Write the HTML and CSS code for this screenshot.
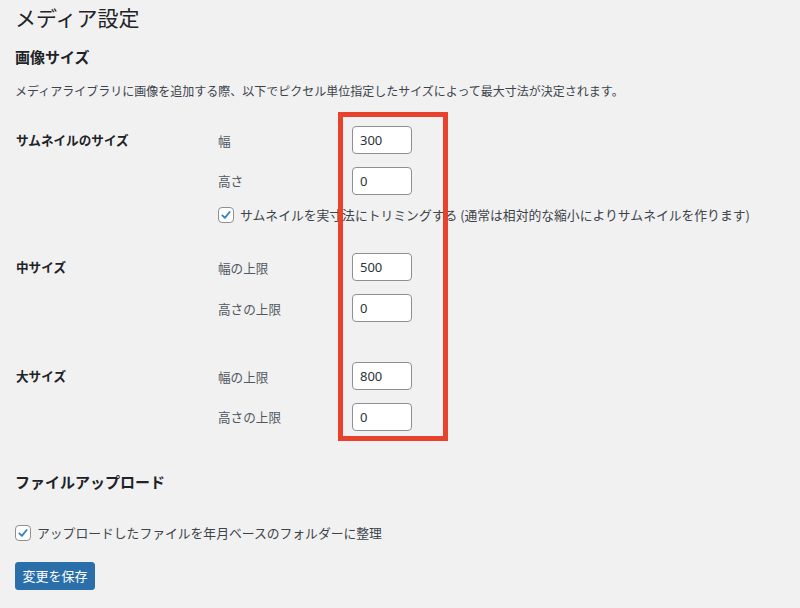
FILE: index.html
```html
<!DOCTYPE html>
<html lang="ja">
<head>
<meta charset="utf-8">
<title>メディア設定</title>
<link rel="stylesheet" href="styles.css">
</head>
<body>
<div class="wrap">
  <h1 class="title">メディア設定</h1>
  <h2 class="heading">画像サイズ</h2>
  <p class="desc">メディアライブラリに画像を追加する際、以下でピクセル単位指定したサイズによって最大寸法が決定されます。</p>

  <div class="group group-first">
    <div class="th">サムネイルのサイズ</div>
    <div class="fields">
      <div class="field"><span class="flabel">幅</span><span class="input">300</span></div>
      <div class="field"><span class="flabel">高さ</span><span class="input">0</span></div>
      <div class="check-row">
        <span class="checkbox"><svg viewBox="0 0 16 16" width="16" height="16"><path d="M3.8 8.4 L6.7 11.3 L12.2 4.6" fill="none" stroke="#3582c4" stroke-width="2.1" stroke-linecap="round" stroke-linejoin="round"/></svg></span>
        <span class="check-text">サムネイルを実寸法にトリミングする (通常は相対的な縮小によりサムネイルを作ります)</span>
      </div>
    </div>
  </div>

  <div class="group group-mid">
    <div class="th">中サイズ</div>
    <div class="fields">
      <div class="field"><span class="flabel">幅の上限</span><span class="input">500</span></div>
      <div class="field"><span class="flabel">高さの上限</span><span class="input">0</span></div>
    </div>
  </div>

  <div class="group group-large">
    <div class="th">大サイズ</div>
    <div class="fields">
      <div class="field"><span class="flabel">幅の上限</span><span class="input">800</span></div>
      <div class="field"><span class="flabel">高さの上限</span><span class="input">0</span></div>
    </div>
  </div>

  <h2 class="heading heading-upload">ファイルアップロード</h2>
  <div class="check-row upload-row">
    <span class="checkbox"><svg viewBox="0 0 16 16" width="16" height="16"><path d="M3.8 8.4 L6.7 11.3 L12.2 4.6" fill="none" stroke="#3582c4" stroke-width="2.1" stroke-linecap="round" stroke-linejoin="round"/></svg></span>
    <span class="check-text">アップロードしたファイルを年月ベースのフォルダーに整理</span>
  </div>
  <button class="save" type="button">変更を保存</button>
</div>
<div class="highlight"></div>
</body>
</html>
```

FILE: styles.css
```css
html, body {
  margin: 0;
  padding: 0;
}
body {
  background: #f1f1f1;
  font-family: "Noto Sans CJK JP", "Noto Sans", sans-serif;
  font-size: 12.4px;
  color: #3c434a;
  width: 800px;
  height: 608px;
  overflow: hidden;
  position: relative;
}
.wrap {
  padding-left: 15px;
  display: flex;
  flex-direction: column;
  align-items: flex-start;
}
.title {
  margin: 0;
  font-size: 21px;
  font-weight: 400;
  line-height: 34px;
  color: #1d2327;
}
.heading {
  margin: 12px 0 0;
  font-size: 15px;
  font-weight: 700;
  line-height: 22px;
  color: #1d2327;
}
.desc {
  margin: 13px 0 0;
  line-height: 20px;
  font-size: 12px;
}
.group {
  display: grid;
  grid-template-columns: 203px auto;
}
.group-first { margin-top: 25px; }
.group-mid { margin-top: 30px; }
.group-large { margin-top: 40px; }
.th {
  font-weight: 700;
  color: #1d2327;
  line-height: 28px;
  padding-left: 1px;
  font-size: 12.6px;
}
.fields {
  display: flex;
  flex-direction: column;
  gap: 12.7px;
}
.field {
  display: flex;
  align-items: center;
  height: 28px;
}
.flabel {
  width: 134px;
  color: #50575e;
  font-size: 12.6px;
}
.input {
  box-sizing: border-box;
  width: 60px;
  height: 28px;
  border: 1px solid #8c8f94;
  border-radius: 4px;
  background: #fff;
  padding: 0 7px;
  font-family: "Noto Sans", "Liberation Sans", sans-serif;
  font-size: 13px;
  line-height: 26px;
  color: #2c3338;
}
.check-row {
  display: flex;
  align-items: center;
  height: 16px;
}
.checkbox {
  box-sizing: border-box;
  width: 16px;
  height: 16px;
  border: 1px solid #8c8f94;
  border-radius: 4px;
  background: #fff;
  display: flex;
  align-items: center;
  justify-content: center;
  margin-right: 6px;
  flex: none;
}
.checkbox svg {
  display: block;
  width: 14px;
  height: 14px;
}
.check-text {
  line-height: 20px;
  font-size: 12.8px;
  white-space: nowrap;
}
.heading-upload {
  margin-top: 40px;
}
.upload-row {
  margin-top: 32px;
  height: 16px;
}
.save {
  margin-top: 21px;
  box-sizing: border-box;
  width: 80px;
  height: 28px;
  border: 1px solid #2a6fa9;
  border-radius: 3px;
  background: #2a6fa9;
  color: #fff;
  font-family: "Noto Sans CJK JP", sans-serif;
  font-size: 13px;
  padding: 0;
  line-height: 26px;
}
.highlight {
  position: absolute;
  left: 338px;
  top: 112px;
  width: 110px;
  height: 329px;
  box-sizing: border-box;
  border: 5px solid #e8412c;
}
```
